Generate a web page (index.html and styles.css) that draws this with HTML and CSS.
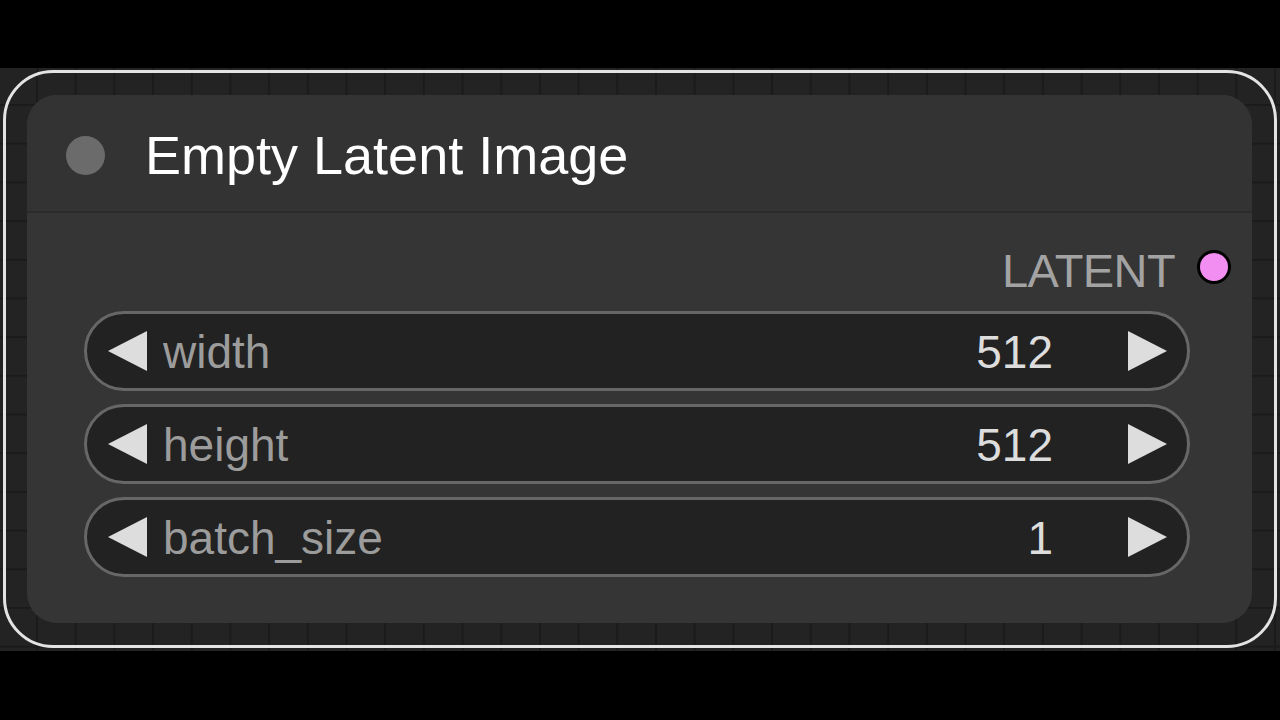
FILE: index.html
```html
<!DOCTYPE html>
<html lang="en">
<head>
<meta charset="utf-8">
<title>Empty Latent Image</title>
<link rel="stylesheet" href="styles.css">
</head>
<body>
<div class="canvas">
  <div class="selection">
    <div class="node">
      <div class="title">
        <span class="dot"></span>
        <span class="title-text">Empty Latent Image</span>
      </div>
      <div class="body">
        <div class="outputs">
          <span class="out-label">LATENT</span>
          <span class="slot"></span>
        </div>
        <div class="widget">
          <svg class="arrow" viewBox="0 0 39 40"><polygon points="0,20 39,0 39,40"/></svg>
          <span class="label">width</span>
          <span class="value">512</span>
          <svg class="arrow" viewBox="0 0 39 40"><polygon points="39,20 0,0 0,40"/></svg>
        </div>
        <div class="widget">
          <svg class="arrow" viewBox="0 0 39 40"><polygon points="0,20 39,0 39,40"/></svg>
          <span class="label">height</span>
          <span class="value">512</span>
          <svg class="arrow" viewBox="0 0 39 40"><polygon points="39,20 0,0 0,40"/></svg>
        </div>
        <div class="widget">
          <svg class="arrow" viewBox="0 0 39 40"><polygon points="0,20 39,0 39,40"/></svg>
          <span class="label">batch_size</span>
          <span class="value">1</span>
          <svg class="arrow" viewBox="0 0 39 40"><polygon points="39,20 0,0 0,40"/></svg>
        </div>
      </div>
    </div>
  </div>
</div>
</body>
</html>
```

FILE: styles.css
```css
html, body {
  margin: 0;
  padding: 0;
  background: #000;
  width: 1280px;
  height: 720px;
  overflow: hidden;
  font-family: "Liberation Sans", Arial, sans-serif;
}

.canvas {
  margin-top: 68px;
  height: 583px;
  box-sizing: border-box;
  padding: 2px 3px 0;
  background-color: #232323;
  background-image:
    linear-gradient(90deg, #1b1b1b 2px, transparent 2px),
    linear-gradient(180deg, #1b1b1b 2px, transparent 2px);
  background-size: 38.7px 38.7px;
  background-position: 36px 36px;
}

.selection {
  border: 3px solid #e4e4e4;
  border-radius: 50px;
  padding: 22px 22px 22px 21px;
}

.node {
  height: 528px;
  border-radius: 30px;
  background: #353535;
  overflow: hidden;
}

.title {
  height: 118px;
  box-sizing: border-box;
  padding: 4px 0 0 39px;
  background: #333333;
  border-bottom: 2px solid #2b2b2b;
  display: flex;
  align-items: center;
  gap: 40px;
}

.dot {
  width: 39px;
  height: 39px;
  border-radius: 50%;
  background: #6b6b6b;
  flex: none;
}

.title-text {
  font-size: 54px;
  line-height: 1;
  color: #ffffff;
}

.body {
  padding-top: 30px;
}

.outputs {
  height: 50px;
  display: flex;
  justify-content: flex-end;
  align-items: center;
  gap: 22px;
  padding-right: 21px;
  margin-bottom: 18px;
}

.out-label {
  font-size: 47px;
  line-height: 1;
  color: #a3a3a3;
  letter-spacing: -0.6px;
  margin-top: 4px;
}

.slot {
  width: 28px;
  height: 28px;
  border: 3.5px solid #000;
  border-radius: 50%;
  background: #f28df2;
  margin-top: -3px;
}

.widget {
  height: 80px;
  box-sizing: border-box;
  margin: 0 62px 13px 57px;
  padding: 0 20px 0 21px;
  border: 3px solid #676767;
  border-radius: 40px;
  background: #222222;
  display: flex;
  align-items: center;
}

.arrow {
  width: 39px;
  height: 40px;
  flex: none;
  fill: #dddddd;
}

.label {
  flex: 1;
  margin-left: 16px;
  font-size: 46px;
  line-height: 1;
  color: #9c9c9c;
  padding-top: 2px;
}

.value {
  margin-right: 75px;
  font-size: 46px;
  line-height: 1;
  color: #dddddd;
  padding-top: 2px;
}
```
